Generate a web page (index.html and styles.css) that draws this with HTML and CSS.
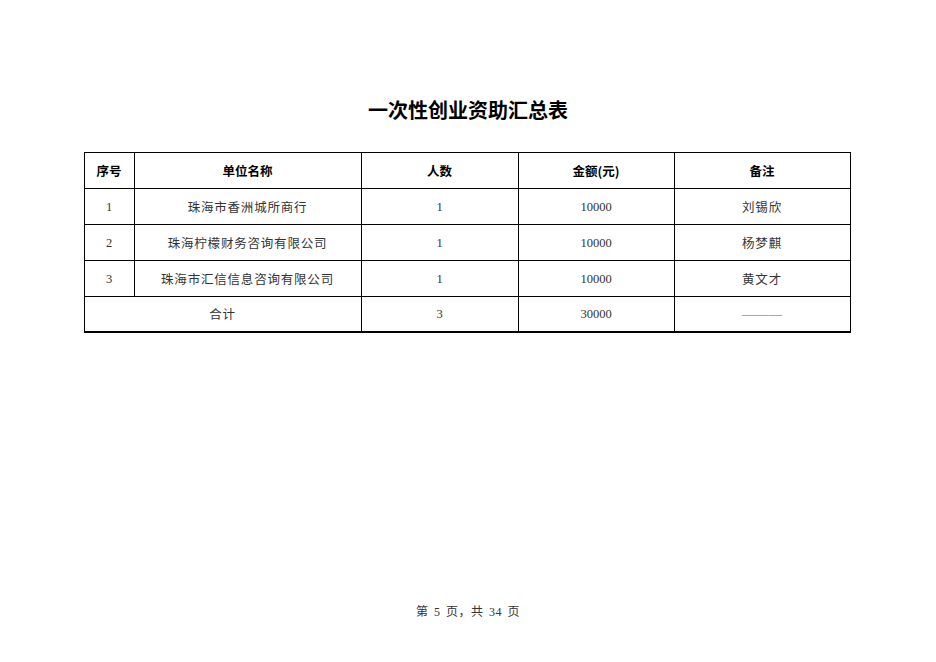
FILE: index.html
```html
<!DOCTYPE html>
<html lang="zh">
<head>
<meta charset="utf-8">
<link rel="stylesheet" href="styles.css">
</head>
<body>
<div class="page">
  <h1 class="title">一次性创业资助汇总表</h1>
  <table class="summary">
    <colgroup>
      <col class="c1"><col class="c2"><col class="c3"><col class="c4"><col class="c5">
    </colgroup>
    <thead>
      <tr><th>序号</th><th>单位名称</th><th>人数</th><th>金额(元)</th><th>备注</th></tr>
    </thead>
    <tbody>
      <tr><td class="num">1</td><td>珠海市香洲城所商行</td><td class="num">1</td><td class="num">10000</td><td>刘锡欣</td></tr>
      <tr><td class="num">2</td><td>珠海柠檬财务咨询有限公司</td><td class="num">1</td><td class="num">10000</td><td>杨梦麒</td></tr>
      <tr><td class="num">3</td><td>珠海市汇信信息咨询有限公司</td><td class="num">1</td><td class="num">10000</td><td>黄文才</td></tr>
      <tr class="total"><td colspan="2">合计</td><td class="num">3</td><td class="num">30000</td><td class="dash">———</td></tr>
    </tbody>
  </table>
  <div class="footer">第 5 页，共 34 页</div>
</div>
</body>
</html>
```
FILE: styles.css
```css
html, body {
  margin: 0;
  padding: 0;
  background: #fff;
}
.page {
  width: 936px;
  height: 662px;
  box-sizing: border-box;
  display: flex;
  flex-direction: column;
  align-items: center;
  padding-top: 96px;
  font-family: "Liberation Serif", "Noto Sans CJK SC", serif;
  color: #111;
}
.title {
  margin: 0;
  font-family: "Noto Sans CJK SC", sans-serif;
  font-size: 20px;
  font-weight: 700;
  line-height: 28px;
  height: 28px;
  color: #000;
}
.summary {
  margin-top: 28px;
  margin-left: -2px;
  border-collapse: collapse;
  table-layout: fixed;
  width: 767px;
  font-size: 12.5px;
}
.c1 { width: 50px; }
.c2 { width: 227px; }
.c3 { width: 157px; }
.c4 { width: 156px; }
.c5 { width: 176px; }
.summary th, .summary td {
  border: 1px solid #000;
  height: 35px;
  padding: 0;
  text-align: center;
  vertical-align: middle;
  line-height: 16px;
}
.summary tr.total td {
  height: 34px;
  border-bottom: 2px solid #000;
}
.summary th {
  font-family: "Noto Sans CJK SC", sans-serif;
  font-weight: 700;
  font-size: 12.5px;
  color: #000;
}
.summary td {
  font-family: "Noto Sans CJK SC", sans-serif;
  font-weight: 400;
  color: #333;
  letter-spacing: 0.8px;
}
.summary td.num {
  font-family: "Liberation Serif", serif;
  font-size: 12.5px;
  letter-spacing: 0;
  color: #333;
}
.summary td.dash {
  font-family: "Liberation Serif", serif;
  font-size: 13.3px;
  letter-spacing: 0;
  color: #666;
}
.footer {
  margin-top: auto;
  margin-bottom: 42px;
  font-family: "Liberation Serif", "Noto Sans CJK SC", serif;
  font-size: 12px;
  word-spacing: 2px;
  letter-spacing: 0.5px;
  color: #333;
}
```
